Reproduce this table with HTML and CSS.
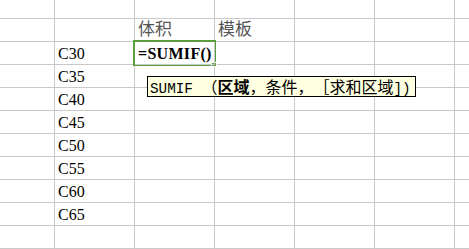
FILE: index.html
```html
<!DOCTYPE html>
<html lang="zh-CN">
<head>
<meta charset="utf-8">
<title>SUMIF</title>
<link rel="stylesheet" href="styles.css">
</head>
<body>
<div class="sheet">
  <div class="grid">
    <div class="c"></div><div class="c"></div><div class="c"></div><div class="c"></div><div class="c"></div><div class="c"></div><div class="c"></div>

    <div class="c"></div><div class="c"></div><div class="c hd">体积</div><div class="c hd">模板</div><div class="c"></div><div class="c"></div><div class="c"></div>

    <div class="c"></div><div class="c val">C30</div><div class="c formula">=SUMIF()</div><div class="c"></div><div class="c"></div><div class="c"></div><div class="c"></div>

    <div class="c"></div><div class="c val">C35</div><div class="c"></div><div class="c"></div><div class="c"></div><div class="c"></div><div class="c"></div>

    <div class="c"></div><div class="c val">C40</div><div class="c"></div><div class="c"></div><div class="c"></div><div class="c"></div><div class="c"></div>

    <div class="c"></div><div class="c val">C45</div><div class="c"></div><div class="c"></div><div class="c"></div><div class="c"></div><div class="c"></div>

    <div class="c"></div><div class="c val">C50</div><div class="c"></div><div class="c"></div><div class="c"></div><div class="c"></div><div class="c"></div>

    <div class="c"></div><div class="c val">C55</div><div class="c"></div><div class="c"></div><div class="c"></div><div class="c"></div><div class="c"></div>

    <div class="c"></div><div class="c val">C60</div><div class="c"></div><div class="c"></div><div class="c"></div><div class="c"></div><div class="c"></div>

    <div class="c"></div><div class="c val">C65</div><div class="c"></div><div class="c"></div><div class="c"></div><div class="c"></div><div class="c"></div>

    <div class="c"></div><div class="c"></div><div class="c"></div><div class="c"></div><div class="c"></div><div class="c"></div><div class="c"></div>
  </div>

  <div class="selection"></div>
  <div class="handle"></div>

  <div class="tip"><span class="lat">SUMIF </span>（<b>区域</b>，条件，［求和区域<span class="lat">])</span></div>
</div>
</body>
</html>
```

FILE: styles.css
```css
html, body {
  margin: 0;
  padding: 0;
  background: #ffffff;
}

.sheet {
  position: relative;
  width: 469px;
  height: 249px;
  overflow: hidden;
}

.grid {
  display: grid;
  grid-template-columns: 55px repeat(6, 80px);
  grid-template-rows: 19px repeat(10, 23px);
  width: 535px;
}

.c {
  border-right: 1px solid #c9c9c9;
  border-bottom: 1px solid #c9c9c9;
  display: flex;
  align-items: flex-end;
  padding: 0 3px 1px 3px;
  overflow: visible;
  white-space: nowrap;
  font-family: "Liberation Serif", serif;
  font-size: 16px;
  line-height: 18px;
  color: #000;
}

.hd {
  font-family: "Noto Sans CJK SC", sans-serif;
  font-size: 17px;
  line-height: 20px;
  color: #555;
  padding-left: 3px;
  padding-bottom: 3px;
}

.val {
  padding-left: 3px;
}

.formula {
  font-weight: bold;
  padding-left: 3px;
  letter-spacing: 0.3px;
  position: relative;
  z-index: 1;
}

.selection {
  position: absolute;
  left: 133px;
  top: 40px;
  width: 79px;
  height: 22px;
  border: 2px solid #5a9d3c;
}

.handle {
  position: absolute;
  left: 211px;
  top: 62px;
  width: 4px;
  height: 3px;
  background: #5a9d3c;
  border: 1px solid #ffffff;
}

.tip {
  position: absolute;
  left: 147px;
  top: 76px;
  width: 265px;
  height: 19px;
  padding: 0 0 0 2px;
  background: #ffffe1;
  border: 1px solid #000;
  font-family: "Noto Sans CJK SC", sans-serif;
  font-size: 16px;
  line-height: 19px;
  color: #000;
  white-space: nowrap;
  text-spacing-trim: space-all;
}

.tip .lat {
  font-family: "Liberation Mono", monospace;
  font-size: 14.3px;
}

.tip b {
  font-weight: bold;
}
```
